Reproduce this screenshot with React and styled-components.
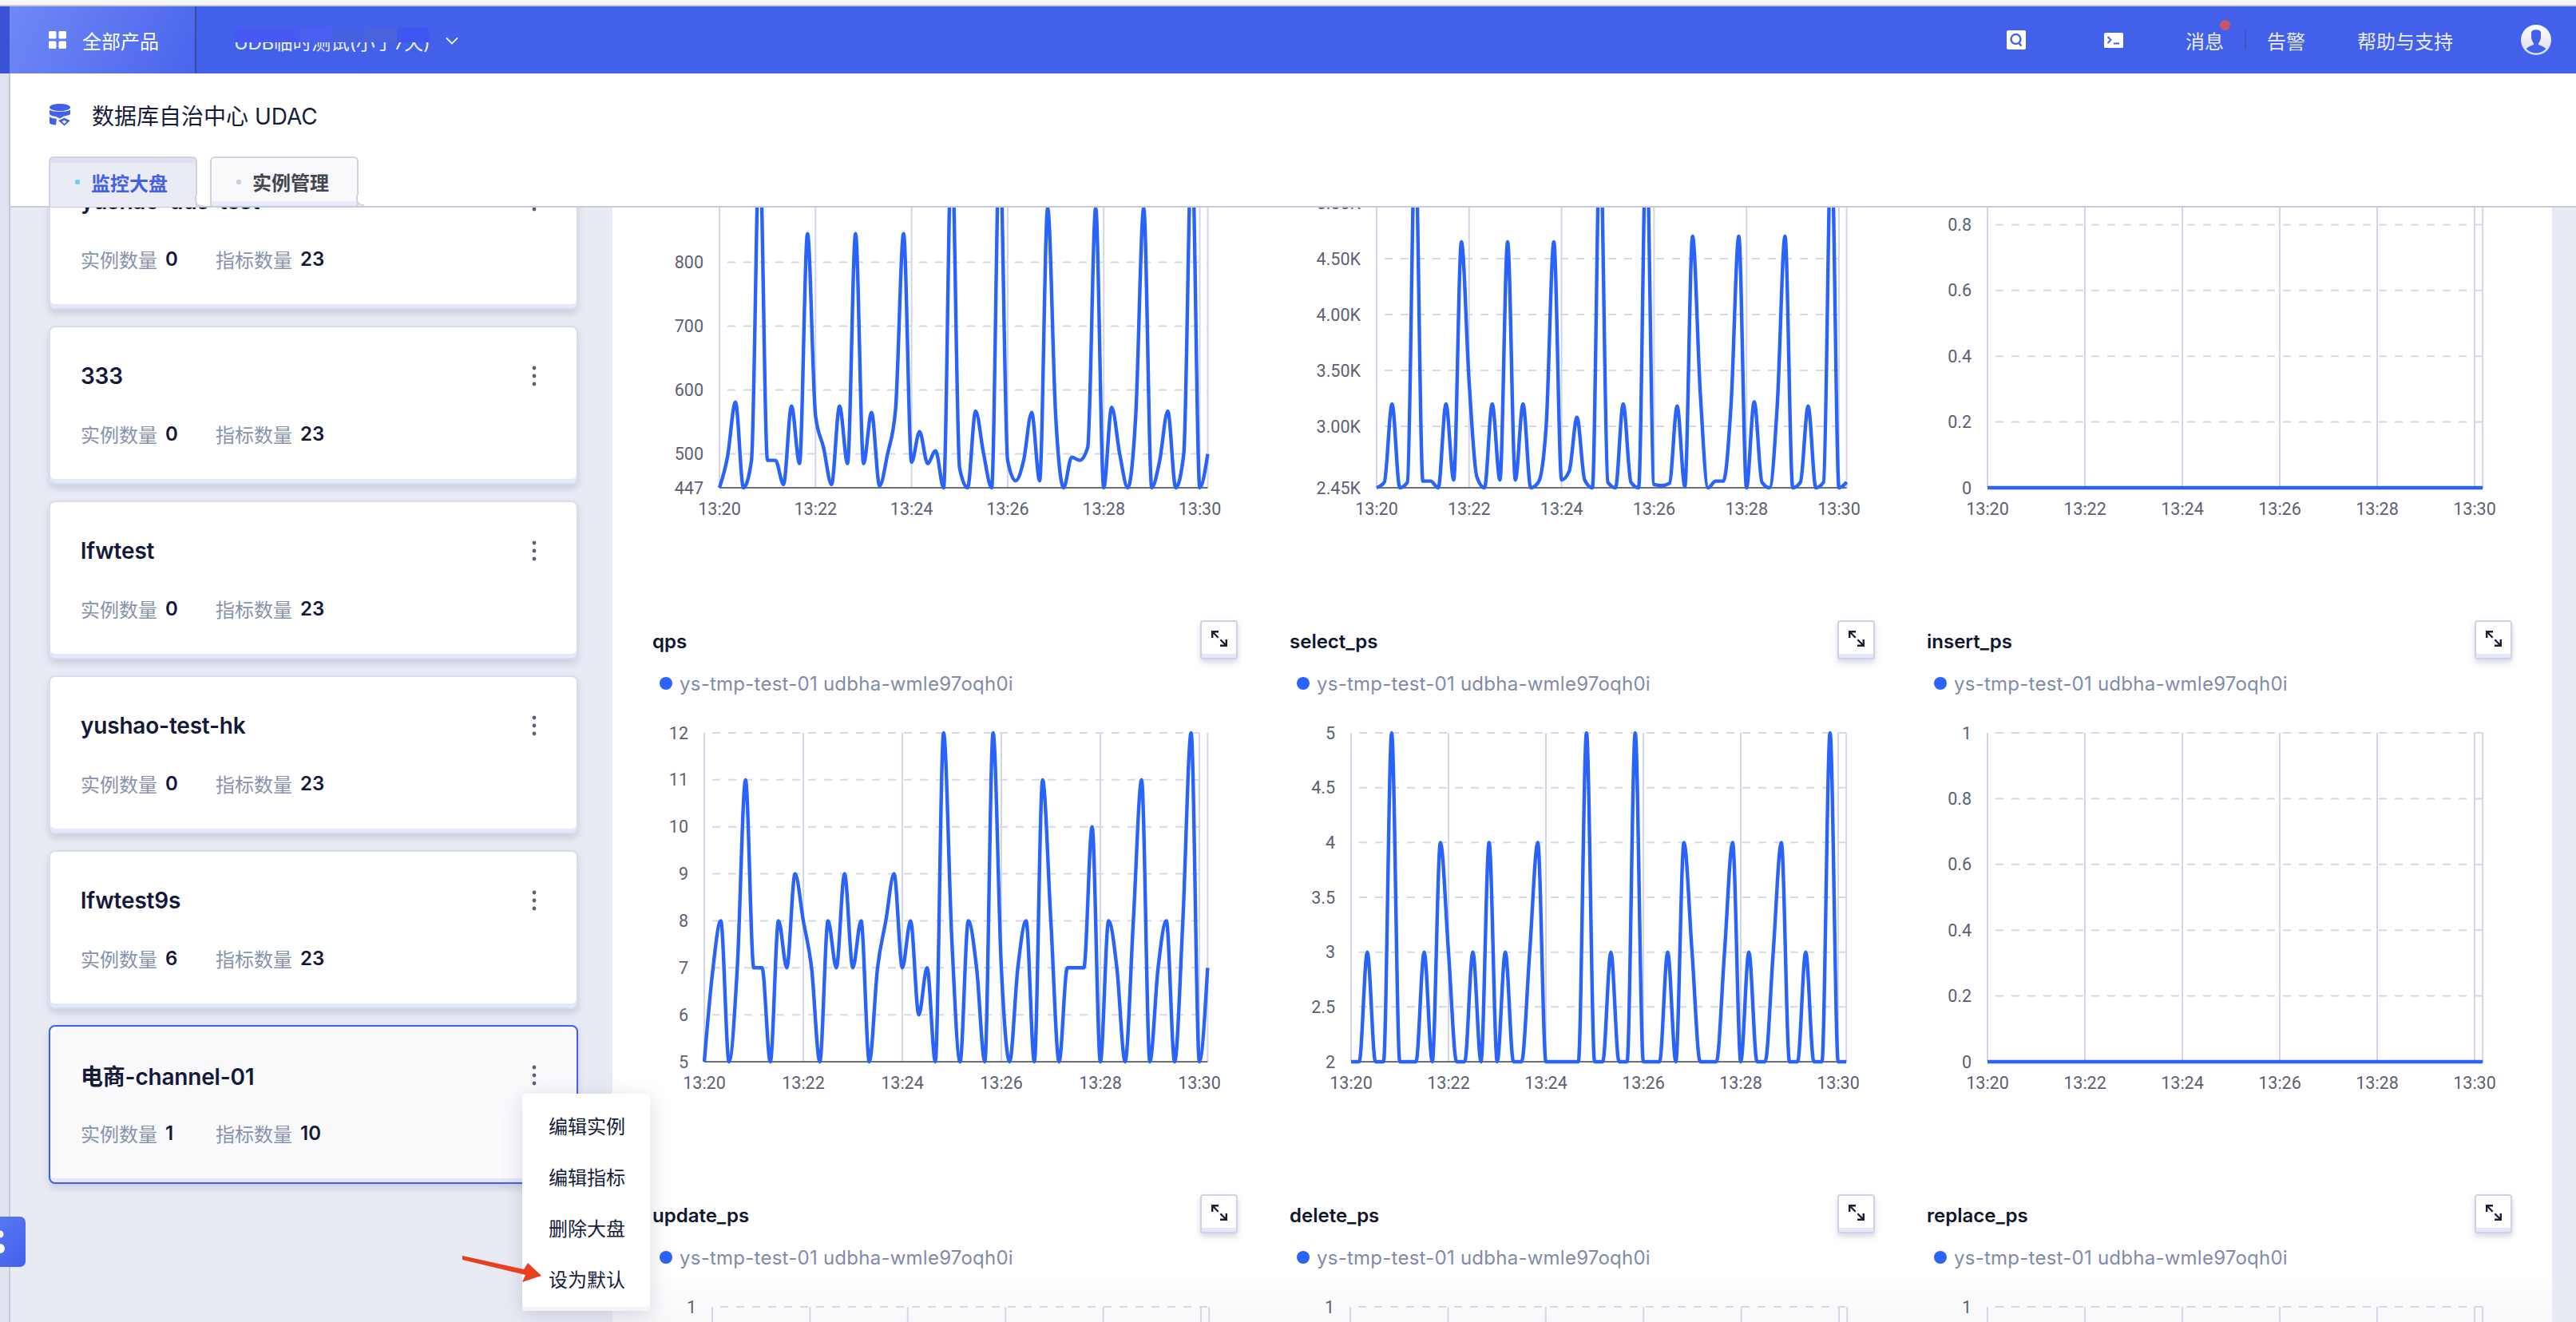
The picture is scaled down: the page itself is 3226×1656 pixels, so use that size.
import React from 'react';
import styled, { createGlobalStyle } from 'styled-components';

const FONT = `Inter, "Noto Sans CJK SC", sans-serif`;

const Global = createGlobalStyle`
  html, body { margin: 0; padding: 0; background: #fff; }
  * { box-sizing: border-box; }
  body { font-family: ${FONT}; }
`;

const Page = styled.div`
  position: relative;
  width: 3226px;
  height: 1656px;
  overflow: hidden;
  display: flex;
  flex-direction: column;
  background: #fff;
`;
const BrowserEdge = styled.div`
  height: 8px;
  flex: none;
  background: #f5f8f7;
  border-bottom: 2px solid #c9cbd0;
`;
const TopBar = styled.header`
  height: 84px;
  flex: none;
  display: flex;
  align-items: center;
  background: #4360ea;
  color: #e8ecfd;
  font-size: 24px;
  padding-left: 12px;
  box-shadow: inset 12px 0 0 #3a53d4;
`;
const Products = styled.div`
  width: 234px;
  height: 100%;
  flex: none;
  display: flex;
  align-items: center;
  gap: 20px;
  padding-left: 49px;
  background: linear-gradient(115deg, #6f88f6 0%, #4a65ec 100%);
  border-right: 2px solid #3a4da6;
  color: #fff;
`;
const Project = styled.div`
  position: relative;
  margin-left: 47px;
  display: flex;
  align-items: center;
  gap: 20px;
  height: 100%;
  padding-top: 2px;
  letter-spacing: -0.35px;
`;
const Mosaic = styled.div`
  position: absolute;
  left: 0;
  top: 27px;
  height: 18px;
  display: flex;
`;
const MosaicTile = styled.span`
  display: block;
  width: ${p => p.$w}px;
  background: ${p => p.$c};
`;
const BarRight = styled.div`
  margin-left: auto;
  display: flex;
  align-items: center;
  height: 100%;
  padding-right: 31px;
`;
const IconSlot = styled.div`
  display: flex;
  margin-right: ${p => p.$mr}px;
`;
const BarLink = styled.span`
  position: relative;
  display: block;
  margin-right: ${p => p.$mr}px;
  white-space: nowrap;
`;
const RedDot = styled.i`
  position: absolute;
  right: -8px;
  top: -8px;
  width: 13px;
  height: 13px;
  border-radius: 50%;
  background: #c8566a;
`;
const BarDivider = styled.span`
  display: block;
  width: 2px;
  height: 24px;
  margin-right: 26px;
  background: #3b55c9;
`;

const Workspace = styled.div`
  flex: 1;
  min-height: 0;
  display: flex;
`;
const Rail = styled.div`
  width: 13px;
  flex: none;
  background: #dfe2ef;
  border-right: 2px solid #c4c8d8;
`;
const Content = styled.div`
  flex: 1;
  min-width: 0;
  display: flex;
  flex-direction: column;
`;
const PageHeader = styled.div`
  position: relative;
  z-index: 3;
  height: 168px;
  flex: none;
  padding: 38px 0 0 48px;
  background: #fff;
  border-bottom: 2px solid #c6cbde;
`;
const TitleRow = styled.div`
  display: flex;
  align-items: center;
  gap: 26px;
  height: 28px;
  font-size: 28px;
  color: #171c3a;
`;
const Tabs = styled.div`
  display: flex;
  gap: 16px;
  margin-top: 38px;
`;
const Tab = styled.div`
  position: relative;
  width: 186px;
  height: ${p => (p.$active ? 63 : 62)}px;
  display: flex;
  align-items: center;
  padding: 0 0 1px 31px;
  gap: 14px;
  border: 2px solid #cdd2e4;
  border-bottom: none;
  border-radius: 6px 6px 0 0;
  font-size: 24px;
  font-weight: 700;
  color: ${p => (p.$active ? '#4360ea' : '#444650')};
  background: ${p => (p.$active ? '#e9ecf5' : '#f9f9fc')};
  box-shadow: ${p => (p.$active ? 'inset 0 6px 0 #dfe2ee' : 'inset 0 -6px 0 #e6eafa')};
  &::after {
    content: '';
    position: absolute;
    right: -9px;
    bottom: 0;
    width: 8px;
    height: 12px;
    border-left: 2px solid #cdd2e4;
    border-bottom: 2px solid #cdd2e4;
    border-radius: 0 0 0 8px;
    background: #fff;
  }
`;
const TabDot = styled.i`
  display: block;
  width: 6px;
  height: 6px;
  border-radius: 2px;
  background: ${p => p.$c};
`;
const Body = styled.div`
  flex: 1;
  min-height: 0;
  display: flex;
  overflow: hidden;
  background: #e9ebf4;
`;
const Sidebar = styled.aside`
  width: 754px;
  flex: none;
  padding: 0 0 0 48px;
  position: relative;
  z-index: 2;
`;
const CardList = styled.div`
  margin-top: -71px;
  width: 663px;
  display: flex;
  flex-direction: column;
  gap: 20px;
`;
const Card = styled.div`
  position: relative;
  height: 199px;
  padding: 37px 50px 0 38px;
  border: 2px solid ${p => (p.$selected ? '#4360ea' : '#d8dcec')};
  border-radius: 8px;
  background: ${p => (p.$selected ? '#fafafd' : '#fff')};
  box-shadow: inset 0 -5px 0 #e4e8fa, 0 5px 10px rgba(90, 100, 140, 0.22);
`;
const CardHead = styled.div`
  height: 48px;
  display: flex;
  align-items: center;
  justify-content: space-between;
  font-size: 28px;
  font-weight: 600;
  letter-spacing: -0.2px;
  color: #14193a;
`;
const Stats = styled.div`
  margin-top: 31px;
  height: 34px;
  display: flex;
  align-items: center;
  font-size: 24px;
  color: #8792ad;
`;
const Stat = styled.span`
  display: flex;
  align-items: center;
  gap: 10px;
  width: 169px;
`;
const StatValue = styled.b`
  font-weight: 600;
  color: #14193a;
`;
const Menu = styled.div`
  position: absolute;
  left: 591px;
  top: 84px;
  z-index: 6;
  width: 160px;
  height: 272px;
  padding: 7px 0 0 33px;
  background: #fff;
  box-shadow: inset 0 -5px 0 #f5f5f7, 0 6px 28px rgba(70, 76, 110, 0.2);
  border-radius: 4px;
`;
const MenuItem = styled.div`
  height: 64px;
  display: flex;
  align-items: center;
  font-size: 24px;
  color: #171c3a;
`;
const Pointer = styled.svg`
  position: absolute;
  left: 507px;
  top: 279px;
  z-index: 7;
`;
const Main = styled.main`
  width: 2429px;
  flex: none;
  background: linear-gradient(#fff calc(100% - 60px), #f8f8fa 100%);
  padding-left: 50px;
`;
const Grid = styled.div`
  margin-top: -201px;
  display: grid;
  grid-template-columns: repeat(3, 733px);
  column-gap: 65px;
  row-gap: 122px;
`;
const ChartCell = styled.section`
  height: 597px;
  display: flex;
  flex-direction: column;
`;
const ChartHead = styled.div`
  height: 47px;
  flex: none;
  display: flex;
  align-items: center;
  justify-content: space-between;
  font-size: 24px;
  font-weight: 600;
  color: #11162f;
`;
const ChartTitle = styled.span`
  display: block;
  padding-top: 3px;
`;
const ExpandButton = styled.div`
  width: 47px;
  height: 49px;
  flex: none;
  display: flex;
  align-items: center;
  justify-content: center;
  padding-bottom: 4px;
  border: 2px solid #cdd2e4;
  border-radius: 4px;
  background: #fff;
  box-shadow: inset 0 -5px 0 #e4e8fa, 0 4px 7px rgba(90, 100, 140, 0.25);
`;
const Legend = styled.div`
  height: 28px;
  flex: none;
  margin-top: 17px;
  padding-left: 9px;
  display: flex;
  align-items: center;
  gap: 9px;
  font-size: 24px;
  letter-spacing: 0.25px;
  color: #7f8bab;
  white-space: nowrap;
`;
const LegendDot = styled.i`
  display: block;
  width: 16px;
  height: 16px;
  border-radius: 50%;
  background: #2a63fa;
`;
const ChartSvg = styled.svg`
  flex: none;
  margin-top: 20px;
  display: block;
  overflow: hidden;
`;
const GridV = styled.line`
  stroke: #d3d6ea;
  stroke-width: 2;
`;
const GridH = styled.line`
  stroke: #d5d8ea;
  stroke-width: 2;
  stroke-dasharray: 10 10;
  stroke-dashoffset: 10;
`;
const AxisLine = styled.line`
  stroke: #6e7079;
  stroke-width: 2;
`;
const Curve = styled.path`
  fill: none;
  stroke: #2a63fa;
  stroke-width: 4.4;
  stroke-linejoin: round;
`;
const TickText = styled.text`
  font-family: Roboto, sans-serif;
  font-size: 21.5px;
  fill: #5a6175;
  dominant-baseline: central;
  text-anchor: ${p => p.$anchor};
`;
const RightStrip = styled.div`
  flex: 1;
  background: #e9ebf4;
`;
const SideHandle = styled.div`
  position: absolute;
  left: 0;
  top: 1524px;
  z-index: 5;
  width: 32px;
  height: 63px;
  display: flex;
  align-items: center;
  border-radius: 0 7px 7px 0;
  background: linear-gradient(135deg, #5877f2 0%, #4361e9 100%);
`;

/* ---------- chart maths ---------- */
const sign = v => (v < 0 ? -1 : 1);
function monotonePath(pts) {
  const n = pts.length;
  const t = new Array(n).fill(0);
  for (let i = 1; i < n - 1; i++) {
    const h0 = pts[i][0] - pts[i - 1][0];
    const h1 = pts[i + 1][0] - pts[i][0];
    const s0 = (pts[i][1] - pts[i - 1][1]) / h0;
    const s1 = (pts[i + 1][1] - pts[i][1]) / h1;
    const p = (s0 * h1 + s1 * h0) / (h0 + h1);
    t[i] = (sign(s0) + sign(s1)) * Math.min(Math.abs(s0), Math.abs(s1), 0.5 * Math.abs(p)) || 0;
  }
  const edge = (a, b, tt) => (3 * (b[1] - a[1]) / (b[0] - a[0]) - tt) / 2;
  t[0] = edge(pts[0], pts[1], t[1]);
  t[n - 1] = edge(pts[n - 2], pts[n - 1], t[n - 2]);
  let d = `M${pts[0][0]} ${pts[0][1]}`;
  for (let i = 0; i < n - 1; i++) {
    const dx = (pts[i + 1][0] - pts[i][0]) / 3;
    d += `C${pts[i][0] + dx} ${pts[i][1] + dx * t[i]} ${pts[i + 1][0] - dx} ${pts[i + 1][1] - dx * t[i + 1]} ${pts[i + 1][0]} ${pts[i + 1][1]}`;
  }
  return d;
}

const PLOT_TOP = 28;
const PLOT_BOTTOM = 440;
const TIMES = ['13:20', '13:22', '13:24', '13:26', '13:28', '13:30'];

const conn = [447, 495, 581, 447, 490, 990, 490, 490, 452, 575, 485, 845, 560, 510, 452, 575, 485, 845, 485, 565, 450, 500, 570, 845, 487, 535, 485, 505, 447, 990, 478, 447, 567, 500, 447, 990, 490, 458, 490, 565, 458, 885, 560, 447, 495, 490, 510, 885, 447, 573, 500, 447, 560, 885, 447, 490, 567, 447, 500, 990, 447, 500];
const tps = [2.45, 2.5, 3.2, 2.45, 2.5, 5.6, 2.51, 2.51, 2.45, 3.2, 2.52, 4.65, 3.4, 2.55, 2.45, 3.2, 2.52, 4.65, 2.52, 3.2, 2.45, 2.5, 3.0, 4.65, 2.52, 2.6, 3.08, 2.52, 2.45, 5.6, 2.5, 2.45, 3.2, 2.5, 2.45, 5.6, 2.48, 2.47, 2.49, 3.18, 2.46, 4.7, 3.3, 2.45, 2.51, 2.51, 3.2, 4.7, 2.45, 3.22, 2.5, 2.45, 3.2, 4.7, 2.45, 2.5, 3.18, 2.45, 2.5, 5.6, 2.45, 2.5];
const qps = [5, 6.9, 8, 5, 7, 11, 7, 7, 5, 8, 7, 9, 8, 7, 5, 8, 7, 9, 7, 8, 5, 7, 8, 9, 7, 8, 6, 7, 5, 12, 7.6, 5, 8, 7, 5, 12, 7, 5, 7, 8, 5, 11, 8, 5, 7, 7, 7, 10, 5, 8, 7, 5, 8, 11, 5, 7, 8, 5, 8, 12, 5, 7];
const select = [2, 2, 3, 2, 2, 5, 2, 2, 2, 3, 2, 4, 3, 2, 2, 3, 2, 4, 2, 3, 2, 2, 3, 4, 2, 2, 2, 2, 2, 5, 2, 2, 3, 2, 2, 5, 2, 2, 2, 3, 2, 4, 3, 2, 2, 2, 3, 4, 2, 3, 2, 2, 3, 4, 2, 2, 3, 2, 2, 5, 2, 2];
const flat = new Array(62).fill(0);

const range01 = [0, 0.2, 0.4, 0.6, 0.8, 1].map(v => ({ v, label: String(v) }));

const charts = [
  { title: 'connections', left: 84, step: 120.3, min: 447, max: 962, values: conn, ticks: [447, 500, 600, 700, 800, 900].map(v => ({ v, label: String(v) })) },
  { title: 'tps', left: 109, step: 115.8, min: 2.45, max: 5.393, values: tps, ticks: [{ v: 2.45, label: '2.45K' }, ...[3, 3.5, 4, 4.5, 5].map(v => ({ v, label: `${v.toFixed(2)}K` }))] },
  { title: 'slow_queries', left: 76, step: 122, min: 0, max: 1, values: flat, ticks: range01 },
  { title: 'qps', left: 65, step: 124, min: 5, max: 12, values: qps, ticks: [5, 6, 7, 8, 9, 10, 11, 12].map(v => ({ v, label: String(v) })) },
  { title: 'select_ps', left: 77, step: 122, min: 2, max: 5, values: select, ticks: [2, 2.5, 3, 3.5, 4, 4.5, 5].map(v => ({ v, label: String(v) })) },
  { title: 'insert_ps', left: 76, step: 122, min: 0, max: 1, values: flat, ticks: range01 },
  { title: 'update_ps', left: 75, step: 122.4, min: 0, max: 1, values: flat, ticks: range01 },
  { title: 'delete_ps', left: 76, step: 122.4, min: 0, max: 1, values: flat, ticks: range01 },
  { title: 'replace_ps', left: 76, step: 122, min: 0, max: 1, values: flat, ticks: range01 },
];

function Chart({ left, step, min, max, values, ticks }) {
  const span = PLOT_BOTTOM - PLOT_TOP;
  const sy = v => PLOT_BOTTOM - ((v - min) / (max - min)) * span;
  const sx = i => left + (i * step) / 12;
  const right = sx(61);
  const pts = values.map((v, i) => [sx(i), sy(v)]);
  return (
    <ChartSvg width="733" height="485" viewBox="0 0 733 485">
      {TIMES.map((t, i) => <GridV key={t} x1={left + i * step} x2={left + i * step} y1={PLOT_TOP} y2={PLOT_BOTTOM} />)}
      <GridV x1={right} x2={right} y1={PLOT_TOP} y2={PLOT_BOTTOM} />
      {ticks.filter(t => t.v !== min).map(t => <GridH key={t.label} x1={left} x2={right} y1={sy(t.v)} y2={sy(t.v)} />)}
      <AxisLine x1={left} x2={right} y1={PLOT_BOTTOM} y2={PLOT_BOTTOM} />
      <Curve d={monotonePath(pts)} />
      {ticks.map(t => <TickText key={t.label} $anchor="end" x={left - 20} y={sy(t.v)}>{t.label}</TickText>)}
      {TIMES.map((t, i) => <TickText key={t} $anchor="middle" x={left + i * step} y={466}>{t}</TickText>)}
    </ChartSvg>
  );
}

/* ---------- icons ---------- */
const GridIcon = () => (
  <svg width="22" height="22" viewBox="0 0 22 22" fill="#fff">
    <rect width="9.5" height="9.5" rx="1.5" />
    <rect x="12.5" width="9.5" height="9.5" rx="1.5" />
    <rect y="12.5" width="9.5" height="9.5" rx="1.5" />
    <rect x="12.5" y="12.5" width="9.5" height="9.5" rx="1.5" />
  </svg>
);
const Chevron = () => (
  <svg width="16" height="10" viewBox="0 0 18 10" fill="none" stroke="#fff" strokeWidth="2">
    <path d="M1 1l8 8 8-8" />
  </svg>
);
const SearchTile = () => (
  <svg width="24" height="24" viewBox="0 0 24 24">
    <rect width="24" height="24" rx="2" fill="#fff" />
    <circle cx="11.5" cy="11" r="6" fill="none" stroke="#4360ea" strokeWidth="2.4" />
    <path d="M15 15.5l3.5 4" stroke="#4360ea" strokeWidth="2.4" />
  </svg>
);
const TerminalTile = () => (
  <svg width="24" height="19" viewBox="0 0 24 19">
    <rect width="24" height="19" rx="1.5" fill="#fff" />
    <path d="M4.5 5l4 4-4 4" fill="none" stroke="#4360ea" strokeWidth="2" />
    <path d="M12 13.5h7" stroke="#4360ea" strokeWidth="2" />
  </svg>
);
const Avatar = () => (
  <svg width="38" height="38" viewBox="0 0 38 38">
    <defs>
      <linearGradient id="av" x1="0" y1="0" x2="0" y2="1">
        <stop offset="0" stopColor="#fff" />
        <stop offset="1" stopColor="#d9dbe6" />
      </linearGradient>
      <clipPath id="avc"><circle cx="19" cy="19" r="16.5" /></clipPath>
    </defs>
    <circle cx="19" cy="19" r="19" fill="url(#av)" />
    <g clipPath="url(#avc)" fill="#4360ea">
      <path d="M13 10c0-5 12-5 12 0v5c0 4-2 7-3 8v2c3 1 9 3 10 7v6H6v-6c1-4 7-6 10-7v-2c-1-1-3-4-3-8z" />
    </g>
  </svg>
);
const DbIcon = () => (
  <svg width="28" height="28" viewBox="0 0 28 28">
    <ellipse cx="14" cy="4.5" rx="13" ry="4.5" fill="#4360ea" />
    <path d="M1 7.5c2 3 24 3 26 0v5.5c-1 1-4 2-8 2.500l-5 3-5-2.500c-4-.5-7-1.500-8-3z" fill="#4360ea" />
    <path d="M1 16c2 2 6 2.500 9 3l-1 7.500c-4 0-8-1-8-3z" fill="#4360ea" />
    <path d="M19.500 17.500l7 3.500v.5l-7 6-7-6v-.5zm0 3l-3 2 3 2.500 3-2.500z" fill="#4360ea" />
  </svg>
);
const DotsIcon = () => (
  <svg width="6" height="26" viewBox="0 0 6 26" fill="#5a6175">
    <circle cx="3" cy="3" r="2.400" />
    <circle cx="3" cy="13" r="2.400" />
    <circle cx="3" cy="23" r="2.400" />
  </svg>
);
const ExpandIcon = () => (
  <svg width="22" height="22" viewBox="0 0 22 22" fill="#1b2036">
    <path d="M1 1h9v2.400H5l5.500 5.500-1.700 1.700L3.400 5.100V10H1z" />
    <path d="M21 21h-9v-2.400h5l-5.500-5.500 1.700-1.700 5.400 5.500V12H21z" />
  </svg>
);
const HandleDots = () => (
  <svg width="8" height="32" viewBox="0 0 8 32" fill="#fff">
    <circle cx="0" cy="6" r="4.500" />
    <circle cx="0" cy="24" r="6" />
  </svg>
);

const cards = [
  { name: 'yushao-dds-test', a: 0, b: 23 },
  { name: '333', a: 0, b: 23 },
  { name: 'lfwtest', a: 0, b: 23 },
  { name: 'yushao-test-hk', a: 0, b: 23 },
  { name: 'lfwtest9s', a: 6, b: 23 },
  { name: '电商-channel-01', a: 1, b: 10, selected: true },
];
const menu = ['编辑实例', '编辑指标', '删除大盘', '设为默认'];
const mosaic = [[82, '#4659f5'], [40, '#4a5ff0'], [43, '#4560e0'], [39, '#4a62dc'], [40, '#3f56f2']];

export default function App() {
  return (
    <Page>
      <Global />
      <BrowserEdge />
      <TopBar>
        <Products><GridIcon />全部产品</Products>
        <Project>
          UDB临时测试(小于7天)
          <Chevron />
          <Mosaic>{mosaic.map(([w, c], i) => <MosaicTile key={i} $w={w} $c={c} />)}</Mosaic>
        </Project>
        <BarRight>
          <IconSlot $mr={98}><SearchTile /></IconSlot>
          <IconSlot $mr={78}><TerminalTile /></IconSlot>
          <BarLink $mr={26}>消息<RedDot /></BarLink>
          <BarDivider />
          <BarLink $mr={65}>告警</BarLink>
          <BarLink $mr={85}>帮助与支持</BarLink>
          <Avatar />
        </BarRight>
      </TopBar>
      <Workspace>
        <Rail />
        <Content>
          <PageHeader>
            <TitleRow><DbIcon />数据库自治中心 UDAC</TitleRow>
            <Tabs>
              <Tab $active><TabDot $c="#6cd0ee" />监控大盘</Tab>
              <Tab><TabDot $c="#cfcfd8" />实例管理</Tab>
            </Tabs>
          </PageHeader>
          <Body>
            <Sidebar>
              <CardList>
                {cards.map(c => (
                  <Card key={c.name} $selected={c.selected}>
                    <CardHead>{c.name}<DotsIcon /></CardHead>
                    <Stats>
                      <Stat>实例数量 <StatValue>{c.a}</StatValue></Stat>
                      <Stat>指标数量 <StatValue>{c.b}</StatValue></Stat>
                    </Stats>
                    {c.selected && (
                      <>
                        <Menu>{menu.map(m => <MenuItem key={m}>{m}</MenuItem>)}</Menu>
                        <Pointer width="115" height="50" viewBox="0 0 115 50">
                          <polygon points="9,8 86,25 91,17 108,33 84,41 88,32 9,13" fill="#e8401f" />
                        </Pointer>
                      </>
                    )}
                  </Card>
                ))}
              </CardList>
            </Sidebar>
            <Main>
              <Grid>
                {charts.map(c => (
                  <ChartCell key={c.title}>
                    <ChartHead><ChartTitle>{c.title}</ChartTitle><ExpandButton><ExpandIcon /></ExpandButton></ChartHead>
                    <Legend><LegendDot />ys-tmp-test-01 udbha-wmle97oqh0i</Legend>
                    <Chart {...c} />
                  </ChartCell>
                ))}
              </Grid>
            </Main>
            <RightStrip />
          </Body>
        </Content>
      </Workspace>
      <SideHandle><HandleDots /></SideHandle>
    </Page>
  );
}
